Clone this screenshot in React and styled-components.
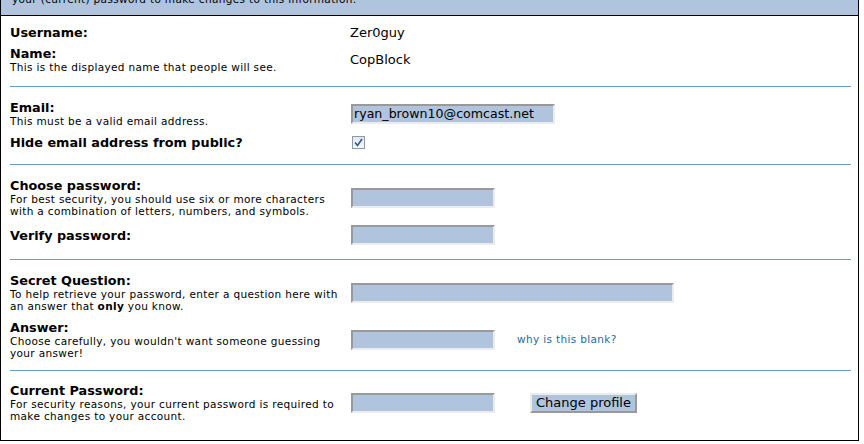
import React from "react";
import styled, { createGlobalStyle } from "styled-components";

const GlobalStyle = createGlobalStyle`
  body {
    margin: 0;
    background: #ffffff;
    font-family: "DejaVu Sans", Verdana, sans-serif;
    color: #000000;
  }
`;

const Panel = styled.div`
  width: 857px;
  border: 1px solid #000000;
  border-top: none;
  background: #ffffff;
`;

// top notice band, only its last line shows in the window
const Notice = styled.div`
  box-sizing: border-box;
  height: 16px;
  background: #b0c4de;
  border-bottom: 1px solid #000000;
  overflow: hidden;
  display: flex;
  flex-direction: column;
  justify-content: flex-end;
  padding: 0 0 9px 11px;
  font-size: 10.5px;
  letter-spacing: 0.35px;
  line-height: 13px;
`;

const Body = styled.div`
  padding: 0 7px 0 9px;
`;

const Section = styled.div`
  display: flex;
  flex-direction: column;
  gap: ${(p) => p.$gap || 8}px;
  padding: ${(p) => p.$pt ?? 13}px 0 ${(p) => p.$pb ?? 14}px;
  border-bottom: ${(p) => (p.$last ? "none" : "1px solid #6a9ac8")};
`;

const Row = styled.div`
  display: grid;
  grid-template-columns: 340px 1fr;
  align-items: center;
`;

const Label = styled.div`
  font-size: 12.8px;
  font-weight: bold;
  line-height: 15px;
`;

const Hint = styled.div`
  font-size: 10.5px;
  letter-spacing: 0.35px;
  line-height: 12px;
  b {
    font-weight: bold;
  }
`;

const Value = styled.div`
  display: flex;
  align-items: center;
  font-size: 13px;
  line-height: 15px;
`;

const Field = styled.div`
  box-sizing: border-box;
  width: ${(p) => p.$w || 144}px;
  height: 20px;
  margin-left: 1px;
  background: #b0c4de;
  border-style: solid;
  border-width: 2px;
  border-color: #999999 #ececec #ececec #999999;
  font-size: 12.6px;
  line-height: 16px;
  padding-left: 1px;
  white-space: nowrap;
  overflow: hidden;
`;

const Check = styled.span`
  box-sizing: border-box;
  width: 13px;
  height: 13px;
  margin-left: 2px;
  border: 1px solid #8c9aa8;
  background: linear-gradient(#e2e6ea, #f8f9fa);
  display: flex;
  align-items: center;
  justify-content: center;
`;

const HelpLink = styled.a`
  margin-left: 22px;
  font-size: 10.5px;
  letter-spacing: 0.35px;
  color: #1f6b9c;
  text-decoration: none;
`;

const Button = styled.button`
  box-sizing: border-box;
  margin-left: 35px;
  width: 107px;
  height: 20px;
  padding: 0;
  background: #b0c4de;
  border-style: solid;
  border-width: 2px;
  border-color: #ececec #999999 #999999 #ececec;
  font-family: "DejaVu Sans", Verdana, sans-serif;
  font-size: 13px;
  line-height: 16px;
  color: #000000;
`;

export default function App() {
  return (
    <>
      <GlobalStyle />
      <Panel>
        <Notice>
          <div>Use this form to change your profile. You must enter</div>
          <div>your (current) password to make changes to this information.</div>
        </Notice>
        <Body>
          <Section $pt={9} $pb={13} $gap={6}>
            <Row>
              <Label>Username:</Label>
              <Value>Zer0guy</Value>
            </Row>
            <Row>
              <div>
                <Label>Name:</Label>
                <Hint>This is the displayed name that people will see.</Hint>
              </div>
              <Value>CopBlock</Value>
            </Row>
          </Section>

          <Section>
            <Row>
              <div>
                <Label>Email:</Label>
                <Hint>This must be a valid email address.</Hint>
              </div>
              <Value>
                <Field $w={204}>ryan_brown10@comcast.net</Field>
              </Value>
            </Row>
            <Row>
              <Label>Hide email address from public?</Label>
              <Value>
                <Check>
                  <svg width="9" height="9" viewBox="0 0 9 9">
                    <path d="M1 4.5 L3.5 7.5 L8 1" fill="none" stroke="#2b55a8" strokeWidth="1.6" />
                  </svg>
                </Check>
              </Value>
            </Row>
          </Section>

          <Section>
            <Row>
              <div>
                <Label>Choose password:</Label>
                <Hint>
                  For best security, you should use six or more characters
                  <br />
                  with a combination of letters, numbers, and symbols.
                </Hint>
              </div>
              <Value>
                <Field />
              </Value>
            </Row>
            <Row>
              <Label>Verify password:</Label>
              <Value>
                <Field />
              </Value>
            </Row>
          </Section>

          <Section $pb={11}>
            <Row>
              <div>
                <Label>Secret Question:</Label>
                <Hint>
                  To help retrieve your password, enter a question here with
                  <br />
                  an answer that <b>only</b> you know.
                </Hint>
              </div>
              <Value>
                <Field $w={323} />
              </Value>
            </Row>
            <Row>
              <div>
                <Label>Answer:</Label>
                <Hint>
                  Choose carefully, you wouldn't want someone guessing
                  <br />
                  your answer!
                </Hint>
              </div>
              <Value>
                <Field />
                <HelpLink href="#">why is this blank?</HelpLink>
              </Value>
            </Row>
          </Section>

          <Section $pt={12} $pb={18} $last>
            <Row>
              <div>
                <Label>Current Password:</Label>
                <Hint>
                  For security reasons, your current password is required to
                  <br />
                  make changes to your account.
                </Hint>
              </div>
              <Value>
                <Field />
                <Button>Change profile</Button>
              </Value>
            </Row>
          </Section>
        </Body>
      </Panel>
    </>
  );
}
